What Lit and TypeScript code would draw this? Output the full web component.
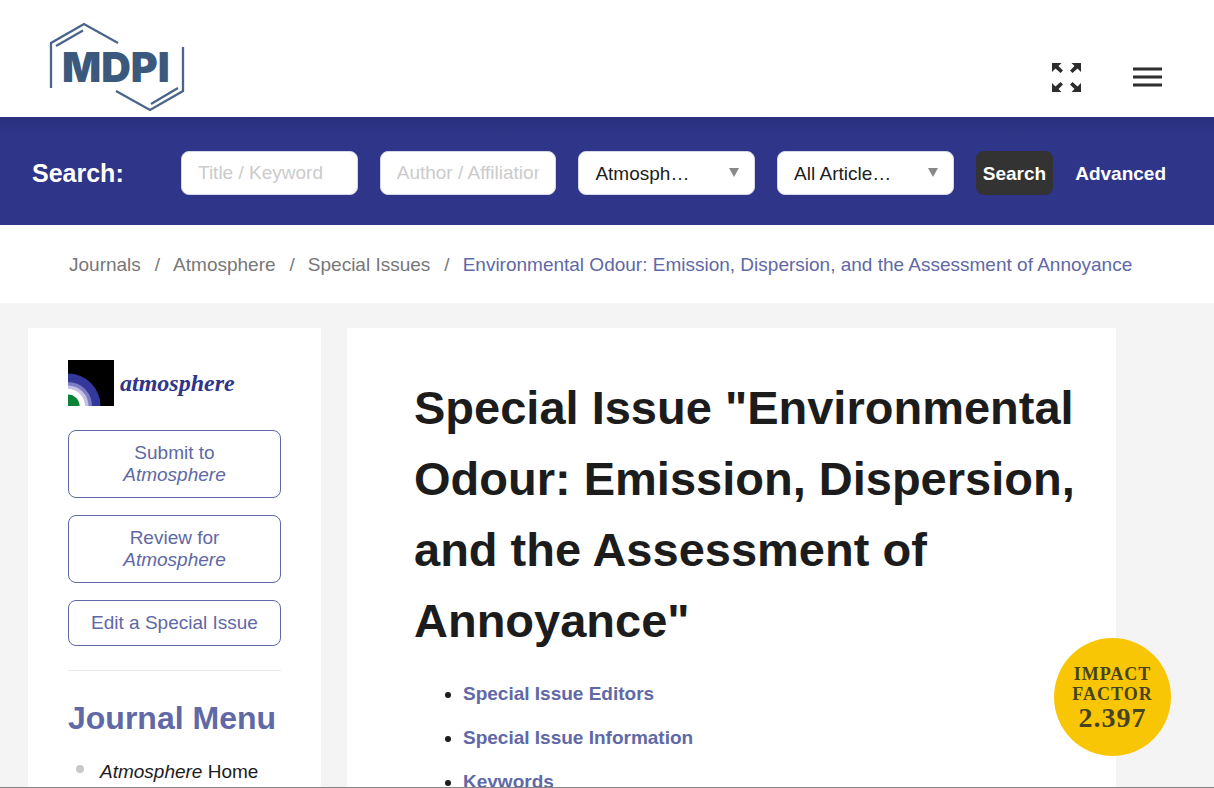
import { LitElement, html, css } from "lit";
import { customElement } from "lit/decorators.js";

@customElement("app-root")
export class AppRoot extends LitElement {
  static styles = css`
    :host {
      display: flex;
      flex-direction: column;
      box-sizing: border-box;
      height: 100vh;
      overflow: hidden;
      border-bottom: 1px solid #858585;
      background: #f4f4f4;
      color: #1c1c1c;
      font-family: "Liberation Sans", Arial, sans-serif;
      font-size: 19px;
      line-height: 23px;
    }
    *, *::before { box-sizing: border-box; }
    a { color: #6068a6; text-decoration: none; }
    header {
      display: flex;
      flex: none;
      align-items: flex-start;
      justify-content: space-between;
      height: 117px;
      padding: 20px 50px 0 46px;
      background: #fff;
    }
    .brand, .brand svg { display: block; }
    .tools { display: flex; gap: 48px; padding-top: 40px; }
    .tool { padding: 0; border: 0; background: none; }
    .tool svg { display: block; }
    .search {
      display: flex;
      flex: none;
      align-items: center;
      gap: 22px;
      padding: 34px 48px 30px 32px;
      background: linear-gradient(#2a307e, #2f3589 20px);
      color: #fff;
      font-weight: bold;
    }
    .search-title { flex: 0 0 127px; font-size: 25px; line-height: 30px; }
    .field { position: relative; flex: 1 1 0; min-width: 0; }
    .control {
      display: block;
      width: 100%;
      height: 44px;
      padding: 0 16px;
      border: 1px solid #d5d6e6;
      border-radius: 8px;
      background: #fff;
      color: #1c1c1c;
      font: 19px/23px "Liberation Sans", Arial, sans-serif;
      appearance: none;
    }
    .control::placeholder { color: #cbcbcb; opacity: 1; }
    .arrow {
      position: absolute;
      top: 17px;
      right: 16px;
      border: 5px solid transparent;
      border-top: 9px solid #888;
      border-bottom: 0;
      pointer-events: none;
    }
    .submit {
      height: 44px;
      padding: 0 7px;
      border: 0;
      border-radius: 8px;
      background: #333;
      color: #fff;
      font: bold 19px/23px "Liberation Sans", Arial, sans-serif;
    }
    .advanced { color: #fff; }
    .crumbs {
      flex: none;
      padding: 28px 69px 27px;
      background: #fff;
    }
    .crumbs ol { display: flex; margin: 0; padding: 0; list-style: none; white-space: nowrap; }
    .crumbs li + li::before { content: "/"; padding: 0 13px 0 14px; color: #777; }
    .past { color: #777; }
    .content {
      display: grid;
      grid-template-columns: 293px minmax(0, 1fr);
      gap: 26px;
      flex: 1 0 auto;
      padding: 25px 98px 0 28px;
    }
    .side { padding: 32px 40px; background: #fff; }
    .journal {
      display: flex;
      align-items: center;
      gap: 6px;
      margin-bottom: 24px;
      color: #2f3589;
      font: italic bold 24px/28px "Liberation Serif", "Times New Roman", serif;
    }
    .actions { display: grid; gap: 17px; padding-bottom: 24px; border-bottom: 1px solid #e9e9e9; }
    .action {
      padding: 11px 12px;
      border: 1px solid #6068a6;
      border-radius: 8px;
      line-height: 22px;
      text-align: center;
    }
    .action em { display: block; }
    h2 { margin: 29px 0 24px; color: #6068a6; font-size: 32px; line-height: 36px; }
    .menu { margin: 0; padding: 0; list-style: none; }
    .menu li { display: flex; align-items: flex-start; gap: 16px; padding-left: 8px; }
    .menu li::before {
      content: "";
      width: 8px;
      height: 8px;
      margin-top: 5px;
      border-radius: 50%;
      background: #c9c9c9;
    }
    .menu a { color: #1c1c1c; }
    .article { padding: 44px 30px 0 67px; background: #fff; }
    h1 { margin: 0; font-size: 47px; line-height: 71px; }
    .toc { margin: 26px 0 0; padding: 0 0 0 49px; font-weight: bold; }
    .toc li { margin-bottom: 21px; }
    .badge {
      position: absolute;
      right: 43px;
      bottom: 32px;
      display: flex;
      flex-direction: column;
      align-items: center;
      justify-content: center;
      width: 117px;
      height: 118px;
      padding-top: 2px;
      border-radius: 50%;
      background: #f9c606;
      color: #45441f;
      font: bold 18px/20px "Liberation Serif", "Times New Roman", serif;
      letter-spacing: 1px;
    }
    .badge strong { font-size: 28px; line-height: 28px; }
  `;

  render() {
    return html`
      <header>
        <a class="brand" href="#" aria-label="MDPI">
          <svg width="142" height="94" viewBox="0 0 142 94" fill="none" stroke="#4a658a" stroke-width="2.3">
            <path d="M5 68V23L38 4L72 23M10 26L37 10.5" />
            <path d="M137 27V71L104 90L70 71M105 84L132 68" />
            <text x="16" y="62" fill="#3b587d" stroke="none" font-family="Inter, Liberation Sans, sans-serif" font-weight="900" font-size="41">MDPI</text>
          </svg>
        </a>
        <div class="tools">
          <button class="tool" aria-label="Full width">
            <svg width="34" height="34" viewBox="0 0 34 34" fill="#2d2d2d">
              <path d="M4 3h9.500l-3 3 4.500 4.500-2.500 2.500-5-4.500L4 12z" />
              <path d="M33 3h-9.500l3 3-4.500 4.500 2.500 2.500 5-4.500L33 12z" />
              <path d="M4 32h9.500l-3-3 4.500-4.500-2.500-2.500-5 4.500L4 23z" />
              <path d="M33 32h-9.500l3-3-4.500-4.500 2.500-2.500 5 4.500L33 23z" />
            </svg>
          </button>
          <button class="tool" aria-label="Menu">
            <svg width="34" height="34" viewBox="0 0 34 34" fill="#2d2d2d">
              <path d="M3 7.500h29v3H3zM3 15.500h29v3H3zM3 23.500h29v3H3z" />
            </svg>
          </button>
        </div>
      </header>

      <form class="search">
        <span class="search-title">Search:</span>
        <div class="field"><input class="control" aria-label="Title / Keyword" placeholder="Title / Keyword" /></div>
        <div class="field"><input class="control" aria-label="Author / Affiliation" placeholder="Author / Affiliation" /></div>
        <div class="field">
          <select class="control" aria-label="Journal"><option>Atmosph…</option></select>
          <span class="arrow"></span>
        </div>
        <div class="field">
          <select class="control" aria-label="Article type"><option>All Article…</option></select>
          <span class="arrow"></span>
        </div>
        <button class="submit" type="button">Search</button>
        <a class="advanced" href="#">Advanced</a>
      </form>

      <nav class="crumbs" aria-label="Breadcrumb">
        <ol>
          <li><a class="past" href="#">Journals</a></li>
          <li><a class="past" href="#">Atmosphere</a></li>
          <li><a class="past" href="#">Special Issues</a></li>
          <li><a href="#">Environmental Odour: Emission, Dispersion, and the Assessment of Annoyance</a></li>
        </ol>
      </nav>

      <div class="content">
        <aside class="side">
          <a class="journal" href="#">
            <svg width="46" height="46" viewBox="0 0 46 46" aria-hidden="true">
              <path d="M0 0h46v46H0z" fill="#000" />
              <circle cx="0" cy="46" r="32.500" fill="#33389a" />
              <circle cx="0" cy="46" r="24" fill="#7c7cc4" />
              <circle cx="0" cy="46" r="20.500" fill="#c3c1e4" />
              <circle cx="0" cy="46" r="17" fill="#fff" />
              <circle cx="0" cy="46" r="11.500" fill="#0b8339" />
            </svg>
            <span>atmosphere</span>
          </a>
          <div class="actions">
            <a class="action" href="#">Submit to <em>Atmosphere</em></a>
            <a class="action" href="#">Review for <em>Atmosphere</em></a>
            <a class="action" href="#">Edit a Special Issue</a>
          </div>
          <h2>Journal Menu</h2>
          <ul class="menu">
            <li><a href="#"><em>Atmosphere</em> Home</a></li>
          </ul>
        </aside>
        <main class="article">
          <h1>Special Issue "Environmental Odour: Emission, Dispersion, and the Assessment of Annoyance"</h1>
          <ul class="toc">
            <li><a href="#">Special Issue Editors</a></li>
            <li><a href="#">Special Issue Information</a></li>
            <li><a href="#">Keywords</a></li>
          </ul>
        </main>
      </div>

      <div class="badge"><span>IMPACT</span><span>FACTOR</span><strong>2.397</strong></div>
    `;
  }
}
